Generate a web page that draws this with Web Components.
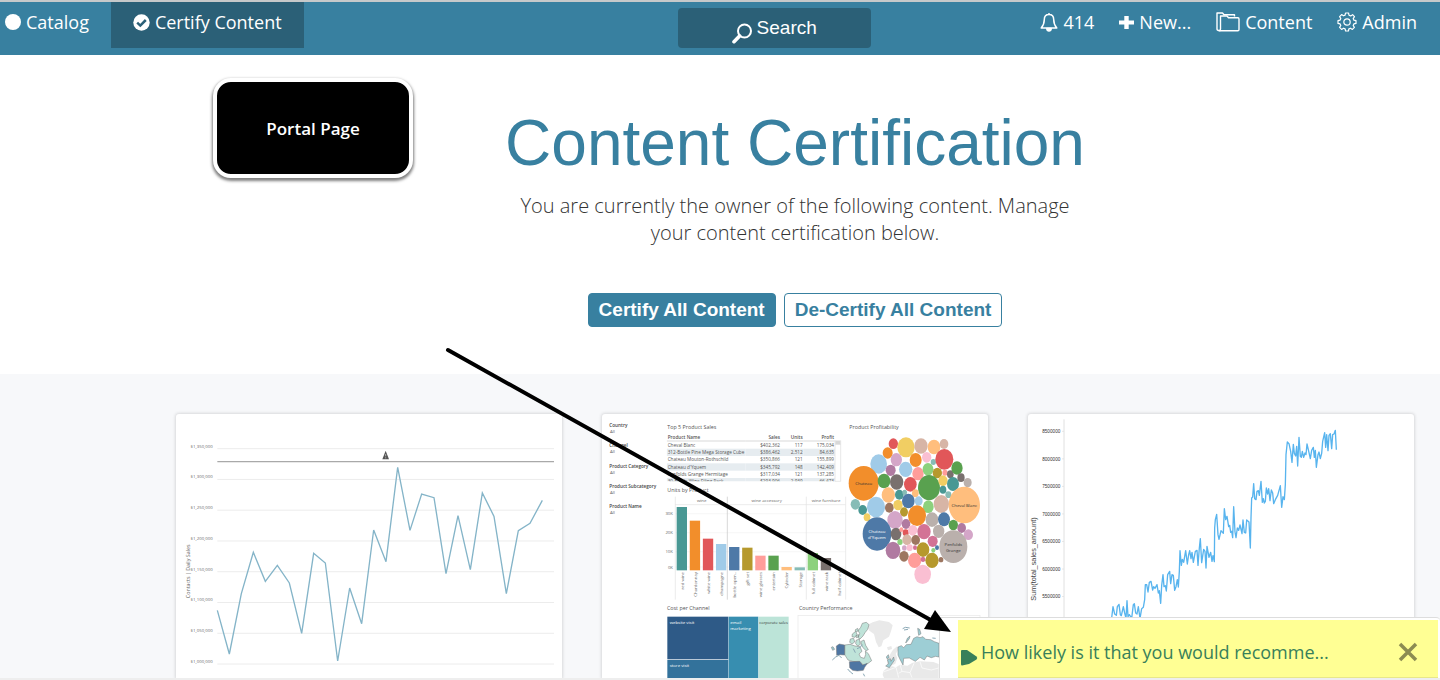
<!DOCTYPE html>
<html lang="en">
<head>
<meta charset="utf-8">
<title>Content Certification</title>
<style>
    body{
        margin: 0;
        background: #ffffff;
        color: #333333;
        font-family: "Open Sans", "Noto Sans", sans-serif;
        --brand: #3880a0;
        --brand-dark: #2b6077;
    }
</style>
</head>
<body>
<portal-page></portal-page>

<script>
const ICONS = {
    circle: `<svg width="16" height="16" viewBox="0 0 16 16"><circle cx="8" cy="8" r="8" fill="#fff"/></svg>`,
    check: `<svg width="17" height="17" viewBox="0 0 17 17"><circle cx="8.500" cy="8.500" r="8.200" fill="#fff"/><path d="M4.200 8.700L7.300 11.600L12.800 6" fill="none" stroke="#2b6077" stroke-width="2.500"/></svg>`,
    search: `<svg width="20" height="21" viewBox="0 0 20 21" fill="none" stroke="#fff"><circle cx="12.500" cy="8" r="6.500" stroke-width="2"/><path d="M7.600 13L2 18.700" stroke-width="3.600" stroke-linecap="round"/></svg>`,
    bell: `<svg width="18" height="20" viewBox="0 0 18 20" fill="none" stroke="#fff" stroke-width="1.500" stroke-linejoin="round"><path d="M9 1V2.500M9 2.500C5.500 2.500 4.300 5 4.300 7.500C4.300 11.500 3.400 13.500 1.200 16H16.800C14.600 13.500 13.700 11.500 13.700 7.500C13.700 5 12.500 2.500 9 2.500Z"/><path d="M6.800 16.500A2.200 2.400 0 0 0 11.200 16.500Z" fill="#fff"/></svg>`,
    plus: `<svg width="15" height="15" viewBox="0 0 15 15"><path d="M5.300 1H9.700V5.500H15V9.500H9.700V14H5.300V9.500H0V5.500H5.300Z" fill="#fff"/></svg>`,
    folder: `<svg width="24" height="20" viewBox="0 0 24 20" fill="none" stroke="#fff" stroke-width="1.400" stroke-linejoin="round"><path d="M4.500 18.500H2.500Q1 18.500 1 17V1H6.500L8 2.800H18.500V4.500"/><path d="M4.500 17V4H11L12.500 5.800H22Q23 5.800 23 7V17.500Q23 18.700 21.800 18.700H3.200Q4.500 18.500 4.500 17Z"/></svg>`,
    gear: `<svg width="20" height="20" viewBox="0 0 20 20" fill="none" stroke="#fff" stroke-width="1.200" stroke-linejoin="round"><path d="M8.500 1H11.500L12 3.200L13.700 3.900L15.600 2.700L17.500 4.700L16.200 6.600L16.900 8.200L19 8.600V11.400L16.900 11.900L16.200 13.500L17.400 15.400L15.400 17.400L13.500 16.200L11.900 16.900L11.400 19H8.600L8.100 16.900L6.500 16.200L4.600 17.400L2.600 15.400L3.800 13.500L3.100 11.900L1 11.400V8.600L3.100 8.100L3.800 6.500L2.600 4.600L4.600 2.600L6.500 3.800L8.100 3.100Z"/><circle cx="10" cy="10" r="3.200"/></svg>`
}

class NavItem extends HTMLElement{

    constructor(){
        super()
        this.attachShadow({mode: 'open'}).innerHTML = `
            <style>
                :host{
                    display: flex;
                }
                a{
                    display: flex;
                    align-items: center;
                    gap: 5px;
                    height: 40px;
                    color: #ffffff;
                    font-size: 18px;
                    text-decoration: none;
                    white-space: nowrap;
                }
                :host([active]) a{
                    padding: 0 22px 6px;
                    background: var(--brand-dark);
                }
                svg{
                    display: block;
                }
            </style>
            <a href="#">${ICONS[this.getAttribute('icon')]}<span><slot></slot></span></a>
        `
    }
}

class PortalHeader extends HTMLElement{

    constructor(){
        super()
        this.attachShadow({mode: 'open'}).innerHTML = `
            <style>
                :host{
                    display: grid;
                    grid-template-columns: 25fr auto 21fr;
                    align-items: start;
                    height: 53px;
                    border-top: 2px solid #c6c9ca;
                    background: var(--brand);
                }
                nav{
                    display: flex;
                }
                .left{
                    gap: 22px;
                    padding-left: 5px;
                }
                .right{
                    gap: 25px;
                    justify-content: flex-end;
                    padding-right: 23px;
                }
                button{
                    display: flex;
                    align-items: center;
                    justify-content: center;
                    gap: 5px;
                    width: 193px;
                    height: 40px;
                    margin-top: 6px;
                    padding: 0;
                    border: 0;
                    border-radius: 4px;
                    background: var(--brand-dark);
                    color: #ffffff;
                    font: 19px "Liberation Sans", sans-serif;
                }
                button svg{
                    margin-top: 10px;
                }
            </style>
            <nav class="left">
                <nav-item icon="circle">Catalog</nav-item>
                <nav-item icon="check" active>Certify Content</nav-item>
            </nav>
            <button type="button">${ICONS.search}<span>Search</span></button>
            <nav class="right">
                <nav-item icon="bell">414</nav-item>
                <nav-item icon="plus">New...</nav-item>
                <nav-item icon="folder">Content</nav-item>
                <nav-item icon="gear">Admin</nav-item>
            </nav>
        `
    }
}

class PageHero extends HTMLElement{

    constructor(){
        super()
        this.attachShadow({mode: 'open'}).innerHTML = `
            <style>
                :host{
                    display: block;
                    padding: 50px 26px 47px 176px;
                    text-align: center;
                }
                h1{
                    margin: 0;
                    color: var(--brand);
                    font: 64px/77px "Liberation Sans", sans-serif;
                }
                p{
                    max-width: 580px;
                    margin: 10px auto 47px;
                    font-size: 20px;
                    font-weight: 300;
                    line-height: 27px;
                }
                .actions{
                    display: flex;
                    justify-content: center;
                    gap: 8px;
                }
                button{
                    height: 34px;
                    padding: 0 10px;
                    border: 1px solid var(--brand);
                    border-radius: 4px;
                    background: #ffffff;
                    color: var(--brand);
                    font: bold 19px "Liberation Sans", sans-serif;
                }
                button.primary{
                    background: var(--brand);
                    color: #ffffff;
                }
            </style>
            <h1><slot name="title"></slot></h1>
            <p><slot></slot></p>
            <div class="actions">
                <button type="button" class="primary">Certify All Content</button>
                <button type="button">De-Certify All Content</button>
            </div>
        `
    }
}

class ContentCard extends HTMLElement{

    constructor(){
        super()
        this.attachShadow({mode: 'open'}).innerHTML = `
            <style>
                :host{
                    display: block;
                    border-radius: 3px 3px 0 0;
                    background: #ffffff;
                    box-shadow: 0 0 3px 1px rgba(0, 0, 0, 0.12);
                    overflow: hidden;
                }
            </style>
            <slot></slot>
        `
    }
}

// shared rules for the three thumbnails, drawn at three units per pixel
const CHART_STYLE = `
    <style>
        :host{
            display: block;
        }
        svg{
            display: block;
            width: 100%;
        }
        text{
            fill: #666666;
            font-family: "Open Sans", sans-serif;
            font-size: 15px;
        }
        .end{
            text-anchor: end;
        }
        .mid{
            text-anchor: middle;
        }
    </style>
`

class DailySalesChart extends HTMLElement{

    constructor(){
        super()
        const labels = ['$1,350,000', '$1,300,000', '$1,250,000', '$1,200,000', '$1,150,000', '$1,100,000', '$1,050,000', '$1,000,000']
        const rows = labels.map((label, i) => {
            const y = 132 + i * 92.3
            return `<path d="M142 ${y}H1152" stroke="#ececec" stroke-width="3"/><text class="end" x="128" y="${y - 3}" style="font-size:13px;fill:#666">${label}</text>`
        }).join('')
        this.attachShadow({mode: 'open'}).innerHTML = `
            ${CHART_STYLE}
            <svg viewBox="18 28 1158 792">
                ${rows}
                <text class="mid" transform="translate(61 500) rotate(-90)" style="font-size:16px">Contacts | Daily Sales</text>
                <path d="M142 171H1152" stroke="#a9a9a9" stroke-width="4"/>
                <path d="M647 138L657 164H637Z" fill="#555"/>
                <path d="M647 148V155M647 158V161" stroke="#ddd" stroke-width="2"/>
                <polyline fill="none" stroke="#84b4c8" stroke-width="4" points="142,617 178,748 214,567 250,443 286,530 322,482 358,535 395,686 431,446 466,475 503,769 539,550 575,657 611,376 648,471 683,188 720,377 755,268 792,279 828,507 864,333 901,495 937,265 972,335 1009,567 1045,378 1080,356 1117,287"/>
            </svg>
        `
    }
}

class SalesAmountChart extends HTMLElement{

    constructor(){
        super()
        const ticks = [8500000, 8000000, 7500000, 7000000, 6500000, 6000000, 5500000].map((value, i) => {
            const y = 80 + i * 82.6
            return `<path d="M128 ${y}H134" stroke="#ddd" stroke-width="2"/><text class="end" x="123" y="${y + 5}" style="font:14px Liberation Sans;fill:#333">${value}</text>`
        }).join('')
        this.attachShadow({mode: 'open'}).innerHTML = `
            ${CHART_STYLE}
            <svg viewBox="26 28 1158 792">
                <path d="M134 44V820" stroke="#e0e0e0" stroke-width="3"/>
                ${ticks}
                <text class="mid" transform="translate(51 463) rotate(-90)" style="font:22px Liberation Sans;fill:#444">Sum(total_sales_amount)</text>
                <polyline fill="none" stroke="#58b4ee" stroke-width="4" stroke-linejoin="round" points="270,680 277,640 281,606 286,628 291,632 294,606 299,599 303,630 306,633 312,606 316,625 320,641 323,588 326,636 330,630 337,641 342,600 345,597 349,625 353,628 357,606 362,641 367,612 372,608 376,585 378,540 382,540 386,562 390,533 395,530 400,556 403,546 407,551 413,540 417,565 420,558 424,596 427,543 431,510 434,546 438,543 441,559 445,510 451,500 454,537 458,510 462,512 466,557 470,546 474,525 477,547 480,500 482,438 486,482 489,464 493,473 499,438 504,478 508,450 511,438 515,462 518,443 522,473 528,440 533,437 536,482 540,430 543,402 547,474 553,434 557,440 560,490 563,425 569,458 574,443 578,470 581,453 585,471 586,370 588,345 592,329 596,390 599,404 605,378 612,386 615,312 619,345 623,335 628,366 631,362 634,383 637,380 640,399 643,306 647,382 650,399 654,370 658,377 662,361 668,387 671,346 675,383 679,385 682,346 689,352 693,430 695,340 697,280 700,277 703,237 706,282 710,285 713,260 717,258 720,272 725,230 729,293 732,282 735,295 738,290 741,250 745,268 748,252 752,288 756,256 760,265 763,297 768,285 775,272 783,243 787,308 791,276 795,285 798,240 800,150 804,112 809,117 814,140 818,173 822,119 825,146 829,154 832,125 835,184 839,98 843,155 846,158 849,140 853,158 857,145 860,150 863,118 867,135 873,162 877,137 882,128 885,158 888,137 891,188 896,150 899,142 903,162 907,146 910,110 916,84 919,128 922,90 926,138 929,92 933,87 937,132 940,90 944,88 948,77 951,135"/>
            </svg>
        `
    }
}

class ProductDashboard extends HTMLElement{

    constructor(){
        super()
        this.attachShadow({mode: 'open'}).innerHTML = `
            ${CHART_STYLE}
            <style>
                table{
                    width: 505px;
                    border-collapse: collapse;
                    font: 14px/20px "Open Sans", sans-serif;
                    color: #555555;
                }
                th, td{
                    height: 20px;
                    padding: 1px 3px;
                    text-align: right;
                    white-space: nowrap;
                }
                th{
                    height: 18px;
                    border-bottom: 2px solid #dddddd;
                    font-weight: 600;
                    line-height: 18px;
                }
                th:first-child, td:first-child{
                    width: 220px;
                    text-align: left;
                }
                tbody tr:nth-child(even){
                    background: #e6ecf0;
                }
                .filter{
                    fill: #444444;
                    font-size: 14px;
                    font-weight: 600;
                }
                .head{
                    fill: #555555;
                    font-size: 16px;
                }
                .small{
                    font-size: 13px;
                }
                .dark{
                    fill: #333333;
                }
                .pale{
                    fill: #ffffff;
                }
            </style>
            <svg viewBox="21 28 1158 792">
                ${this._filters()}
                <text class="head" x="217" y="74">Top 5 Product Sales</text>
                <foreignObject x="215" y="88" width="505" height="142">
                    ${this._table()}
                </foreignObject>
                <path d="M720 108H737V230H720ZM720 119H737" fill="none" stroke="#dcdcdc" stroke-width="2"/>
                <rect x="721" y="109" width="15" height="10" fill="#d8d8d8"/>
                <text class="head" x="217" y="262">Units by Product</text>
                ${this._bars()}
                <text class="head" x="763" y="74">Product Profitability</text>
                ${this._bubbles()}
                ${this._treemap()}
                ${this._map()}
            </svg>
        `
    }

    _filters(){
        return ['Country', 'Channel', 'Product Category', 'Product Subcategory', 'Product Name'].map((name, i) => {
            const y = 67 + i * 61
            return `<text class="filter" x="43" y="${y}">${name}</text><text class="small" x="45" y="${y + 18}">All</text>`
        }).join('')
    }

    _table(){
        const rows = [
            ['Cheval Blanc', '$402,362', '117', '175,034'],
            ['312-Bottle Pine Mega Storage Cube', '$386,462', '2,512', '84,635'],
            ['Chateau Mouton-Rothschild', '$350,866', '121', '155,899'],
            ["Chateau d'Yquem", '$345,792', '148', '142,409'],
            ['Penfolds Grange Hermitage', '$317,034', '121', '137,285'],
            ['30-Bottle Wine Filing Rack', '$293,906', '2,939', '66,473']
        ]
        return `
            <table xmlns="http://www.w3.org/1999/xhtml">
                <thead><tr><th>Product Name</th><th>Sales</th><th>Units</th><th>Profit</th></tr></thead>
                <tbody>${rows.map(row => `<tr>${row.map(cell => `<td>${cell}</td>`).join('')}</tr>`).join('')}</tbody>
            </table>
        `
    }

    _bars(){
        const bars = [
            ['red wine', 307, '#499894'], ['Chardonnay', 348, '#f28e2b'], ['white wine', 402, '#e15759'],
            ['champagne', 418, '#a0cbe8'], ['bottle open..', 427, '#4e79a7'], ['gift set', 429, '#b6992d'],
            ['wine glasses', 453, '#ff9d9a'], ['entertain', 453, '#59a14f'], ['Cylinder', 487, '#ffbe7d'],
            ['Storage', 488, '#86bcb6'], ['full cabinet', 445, '#8cd17d'], ['wine rack', 460, '#79706e'],
            ['half cabinet', 497, '#79706e']
        ]
        const grid = [['30K', 327], ['20K', 384], ['10K', 441], ['0K', 487]].map(([label, y]) =>
            `<path d="M240 ${y}H752" stroke="#f3f3f3" stroke-width="2"/><text class="end small" x="234" y="${y + 5}">${label}</text>`
        ).join('')
        return `
            ${grid}
            <path d="M240 300H752M241 276V585M634 276V585M752 276V585" stroke="#e2e2e2" stroke-width="2"/>
            <path d="M397 276V585" stroke="#c4c4c4" stroke-width="2"/>
            <text class="mid small" x="320" y="293">wine</text>
            <text class="mid small" x="515" y="293">wine accessory</text>
            <text class="mid small" x="693" y="293">wine furniture</text>
            ${bars.map(([name, top, color], i) => {
                const x = 245 + i * 39.3
                return `<rect x="${x}" y="${top}" width="31" height="${497 - top}" fill="${color}"/><text class="end small" transform="translate(${x + 21} 502) rotate(-90)">${name}</text>`
            }).join('')}
        `
    }

    _bubbles(){
        const [red, gold, tan, peach, orange, mauve, sky, pink, purple, green, teal, grey, rose, light, olive, silver, blue, brown, magenta, aqua] =
            ['#e15759', '#f1ce63', '#d7b5a6', '#ffbe7d', '#f28e2b', '#d4a6c8', '#a0cbe8', '#fabfd2', '#b07aa1', '#59a14f', '#499894', '#79706e', '#ff9d9a', '#8cd17d', '#b6992d', '#bab0ac', '#4e79a7', '#9d7660', '#d37295', '#86bcb6']
        const bubbles = [
            [175, 117, 14, red], [213, 128, 26, gold], [258, 124, 20, tan], [297, 127, 19, peach], [327, 118, 13, tan],
            [158, 145, 15, orange], [131, 178, 25, sky], [184, 165, 17, mauve], [242, 166, 18, orange], [275, 158, 14, pink],
            [295, 172, 8, aqua], [328, 164, 27, red], [167, 197, 15, purple], [212, 194, 20, sky], [249, 207, 17, rose],
            [279, 194, 16, light], [307, 205, 14, olive], [330, 204, 8, rose], [346, 209, 10, grey], [366, 190, 17, green],
            [378, 219, 11, grey], [398, 234, 12, silver], [86, 236, 45, orange], [147, 229, 19, green], [185, 232, 20, grey],
            [226, 239, 19, red], [282, 249, 33, green], [324, 228, 14, gold], [354, 238, 18, teal], [324, 255, 10, teal],
            [340, 270, 9, aqua], [160, 271, 20, peach], [193, 270, 13, teal], [209, 263, 7, aqua], [241, 266, 10, peach],
            [61, 299, 14, aqua], [83, 316, 13, teal], [96, 338, 10, gold], [123, 307, 27, sky], [163, 309, 13, brown],
            [189, 301, 14, gold], [220, 289, 19, blue], [251, 289, 12, sky], [280, 306, 16, light], [319, 298, 23, tan],
            [388, 301, 47, peach], [207, 322, 12, olive], [246, 333, 27, orange], [291, 345, 19, silver], [327, 344, 18, blue],
            [180, 346, 23, mauve], [213, 358, 13, purple], [355, 361, 14, green], [380, 370, 13, purple], [400, 390, 14, mauve],
            [126, 388, 43, blue], [183, 388, 16, grey], [199, 375, 6, rose], [212, 384, 9, red], [233, 377, 14, pink],
            [267, 381, 20, magenta], [311, 380, 17, silver], [195, 412, 8, light], [216, 405, 14, tan], [242, 406, 13, brown],
            [293, 410, 15, magenta], [208, 430, 7, mauve], [224, 429, 9, pink], [240, 429, 6, magenta], [264, 435, 19, olive],
            [295, 437, 6, light], [306, 429, 6, blue], [355, 426, 42, silver], [174, 437, 22, purple], [207, 455, 14, brown],
            [239, 467, 20, rose], [264, 464, 7, magenta], [291, 467, 20, olive], [318, 465, 7, brown], [263, 509, 25, pink]
        ]
        return `
            <g transform="translate(720 0)">
                ${bubbles.map(([x, y, r, color]) => `<ellipse cx="${x}" cy="${y}" rx="${r}" ry="${Math.round(r * 1.16)}" fill="${color}"/>`).join('')}
                <text class="mid small dark" x="86" y="241">Chateau</text>
                <text class="mid small dark" x="388" y="306">Cheval Blanc</text>
                <text class="mid small pale" x="126" y="385">Chateau</text>
                <text class="mid small pale" x="126" y="403">d'Yquem</text>
                <text class="mid small dark" x="355" y="423">Penfolds</text>
                <text class="mid small dark" x="355" y="441">Grange</text>
            </g>
        `
    }

    _treemap(){
        return `
            <g transform="translate(0 570)">
                <text class="head" x="216" y="46">Cost per Channel</text>
                <rect x="217" y="66" width="183" height="128" fill="#2e5a87"/>
                <rect x="217" y="196" width="183" height="54" fill="#33729b"/>
                <rect x="401" y="66" width="89" height="184" fill="#378eb0"/>
                <rect x="491" y="66" width="90" height="184" fill="#bce4d8"/>
                <text class="small pale" x="224" y="88">website visit</text>
                <text class="small pale" x="224" y="218">store visit</text>
                <text class="small pale" x="406" y="88">email</text>
                <text class="small pale" x="406" y="105">marketing</text>
                <text class="mid dark" x="536" y="87" style="font-size:12px">corporate sales</text>
            </g>
        `
    }

    _map(){
        return `
            <text class="head" x="612" y="616">Country Performance</text>
            <rect x="609" y="632" width="546" height="200" fill="#fff" stroke="#e8e8e8" stroke-width="2"/>
            <g transform="translate(675 600)">
                <path fill="#e9e9e9" d="M140 62L158 53L178 47L207 52L218 62L213 80L207 96L190 107L184 125L176 128L168 112L162 88L148 78ZM201 128L214 124L216 133L204 137ZM190 200L202 189L216 185L228 188L240 180L262 183L278 174L300 170L340 172L356 178V220H192L188 210ZM202 168L211 148L219 135L232 124L236 134L227 148L232 160L226 177L212 184L201 178Z"/>
                <path fill="none" stroke="#fff" stroke-width="2" d="M190 202L228 188L236 219M240 180L246 200L270 204L282 176M270 204L276 219M246 200L236 206M300 171L306 190L334 196L356 190"/>
                <g stroke="#777" stroke-width="1.500" stroke-linejoin="round">
                    <path fill="#bfe3d9" d="M74 121L90 119L105 124L120 126L126 140L117 148L122 158L133 161L137 149L136 139L145 147L155 168L143 177L131 182L121 172L98 170L84 166L74 150Z"/>
                    <path fill="#bfe3d9" d="M122 68L127 56L139 53L147 60L143 74L135 84L129 94L120 103L114 99L119 86L114 78ZM97 88L107 80L111 89L105 98L96 96ZM91 103L101 101L104 112L96 118L89 113ZM108 107L118 103L121 119L113 124L107 117ZM122 111L132 106L137 122L145 135L138 138L128 128ZM109 92L116 90L115 97L109 99ZM105 76L113 71L115 78L109 82Z"/>
                    <path fill="#4e76a3" d="M49 124L58 118L74 121L74 151L61 150L50 152Z"/>
                    <path fill="#4e76a3" d="M88 171L119 170L128 181L142 176L134 188L130 197L112 199L98 197L89 189Z"/>
                    <path fill="#9dced5" d="M234 127L244 123L251 129L259 120L273 119L281 101L291 96L300 99L309 96L317 104L332 105L343 111L357 116V157L347 155L334 159L321 154L313 166L300 158L286 170L268 160L251 161L249 181L239 162L234 151Z"/>
                    <path fill="#9dced5" d="M197 184L206 177L202 165L211 162L213 170L221 157L223 167L214 180L208 189ZM199 157L205 150L207 159L201 162ZM257 115L262 101L270 94L268 102L261 111ZM293 71L299 74L303 87L296 92ZM34 128L39 126L44 134L38 137Z"/>
                </g>
                <path fill="none" stroke="#8aa8b5" stroke-width="3" d="M37 166L47 157L57 152L65 160M248 72L256 68L269 70M252 76L264 74M337 100L347 101M83 193L91 202L99 208M130 207L134 215M111 132L121 128L126 119M100 132L106 144"/>
            </g>
        `
    }
}

class PortalCallout extends HTMLElement{

    constructor(){
        super()
        this.attachShadow({mode: 'open'}).innerHTML = `
            <style>
                :host{
                    display: flex;
                    align-items: center;
                    justify-content: center;
                    box-sizing: border-box;
                    width: 200px;
                    height: 100px;
                    border: 4px solid #ffffff;
                    border-radius: 18px;
                    background: #000000;
                    box-shadow: 0 2px 3px 1px rgba(0, 0, 0, 0.5);
                    color: #ffffff;
                    font-size: 17px;
                    font-weight: 600;
                }
            </style>
            <span><slot></slot></span>
        `
    }
}

class PointerArrow extends HTMLElement{

    constructor(){
        super()
        this.attachShadow({mode: 'open'}).innerHTML = `
            <style>
                :host{
                    display: block;
                    pointer-events: none;
                }
                svg{
                    display: block;
                }
            </style>
            <svg width="510" height="290" viewBox="445 346 510 290">
                <path d="M448 350L936 623" stroke="#000" stroke-width="4" stroke-linecap="round"/>
                <path d="M935 610L924 629L951 632Z"/>
            </svg>
        `
    }
}

class SurveyPrompt extends HTMLElement{

    constructor(){
        super()
        this.attachShadow({mode: 'open'}).innerHTML = `
            <style>
                :host{
                    display: block;
                    box-sizing: border-box;
                    width: 501px;
                    padding: 2px 2px 0 18px;
                    border: 1px solid #dddddd;
                    border-width: 1px 0 0 1px;
                    border-radius: 0 4px 0 0;
                    background: #ffffff;
                }
                .bar{
                    display: flex;
                    align-items: center;
                    gap: 3px;
                    box-sizing: border-box;
                    height: 58px;
                    padding: 6px 20px 0 3px;
                    border-bottom: 1px solid #e8e88a;
                    background: #ffff94;
                    color: #38805a;
                    font-size: 18px;
                }
                .flag{
                    margin-top: 12px;
                }
                span{
                    flex: 1;
                    white-space: nowrap;
                }
                button{
                    padding: 0;
                    border: 0;
                    background: none;
                }
                svg{
                    display: block;
                }
            </style>
            <div class="bar">
                <svg class="flag" width="17" height="16" viewBox="0 0 17 16"><path d="M0 1Q0 0 1 0H6L15.500 6.500Q17 8 15.500 9.500L8 14L1 15.500Q0 15.500 0 14Z" fill="#38805a"/></svg>
                <span><slot></slot></span>
                <button type="button" aria-label="Close"><svg width="20" height="20" viewBox="0 0 20 20"><path d="M2 2L18 18M18 2L2 18" stroke="#8c8c52" stroke-width="3.500"/></svg></button>
            </div>
        `
    }
}

class PortalPage extends HTMLElement{

    constructor(){
        super()
        this.attachShadow({mode: 'open'}).innerHTML = `
            <style>
                :host{
                    display: flex;
                    flex-direction: column;
                    position: relative;
                    box-sizing: border-box;
                    min-height: 100vh;
                    border-bottom: 2px solid #eeeeee;
                    overflow: hidden;
                }
                main{
                    display: flex;
                    flex-direction: column;
                    flex: 1;
                }
                .gallery{
                    display: grid;
                    grid-template-columns: repeat(3, minmax(0, 1fr));
                    gap: 40px;
                    flex: 1;
                    padding: 40px 26px 0 176px;
                    background: #f7f8fa;
                }
                portal-callout{
                    position: absolute;
                    top: 78px;
                    left: 213px;
                }
                pointer-arrow{
                    position: absolute;
                    top: 346px;
                    left: 445px;
                }
                survey-prompt{
                    position: absolute;
                    right: 0;
                    bottom: 0;
                }
            </style>
            <portal-header></portal-header>
            <main>
                <page-hero>
                    <span slot="title">Content Certification</span>
                    You are currently the owner of the following content. Manage your content certification below.
                </page-hero>
                <section class="gallery">
                    <content-card><daily-sales-chart></daily-sales-chart></content-card>
                    <content-card><product-dashboard></product-dashboard></content-card>
                    <content-card><sales-amount-chart></sales-amount-chart></content-card>
                </section>
            </main>
            <portal-callout>Portal Page</portal-callout>
            <survey-prompt>How likely is it that you would recomme...</survey-prompt>
            <pointer-arrow></pointer-arrow>
        `
    }
}

customElements.define('nav-item', NavItem)
customElements.define('portal-header', PortalHeader)
customElements.define('page-hero', PageHero)
customElements.define('content-card', ContentCard)
customElements.define('daily-sales-chart', DailySalesChart)
customElements.define('sales-amount-chart', SalesAmountChart)
customElements.define('product-dashboard', ProductDashboard)
customElements.define('portal-callout', PortalCallout)
customElements.define('pointer-arrow', PointerArrow)
customElements.define('survey-prompt', SurveyPrompt)
customElements.define('portal-page', PortalPage)
</script>
</body>
</html>
